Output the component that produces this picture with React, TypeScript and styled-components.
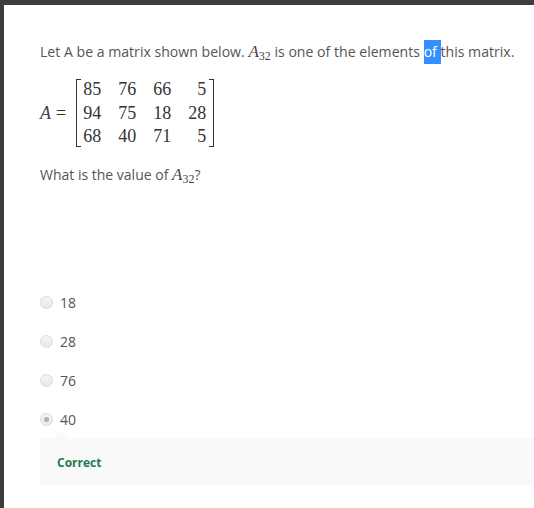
import React from "react";
import styled, { createGlobalStyle } from "styled-components";

const GlobalStyle = createGlobalStyle`
  html, body {
    margin: 0;
    padding: 0;
    background: #3d3d3d;
  }
  body {
    font-family: "Open Sans", "Liberation Sans", sans-serif;
  }
`;

const matrix = [
  [85, 76, 66, 5],
  [94, 75, 18, 28],
  [68, 40, 71, 5],
];

const choices = [
  { label: "18", checked: false },
  { label: "28", checked: false },
  { label: "76", checked: false },
  { label: "40", checked: true },
];

function Sub32() {
  return (
    <MathVar>
      A<Sub>32</Sub>
    </MathVar>
  );
}

export default function App() {
  return (
    <>
      <GlobalStyle />
      <Frame>
        <Page>
          <Prompt>
            Let A be a matrix shown below. <Sub32 /> is one of the elements{" "}
            <Selected>of </Selected>this matrix.
          </Prompt>

          <MatrixRow>
            <MathVar>A</MathVar>
            <Equals>=</Equals>
            <Bracket side="left" />
            <Grid>
              {matrix.map((row, r) =>
                row.map((v, c) => <Cell key={`${r}-${c}`}>{v}</Cell>)
              )}
            </Grid>
            <Bracket side="right" />
          </MatrixRow>

          <Question>
            What is the value of <Sub32 />?
          </Question>

          <Choices>
            {choices.map((ch) => (
              <Choice key={ch.label}>
                <Radio checked={ch.checked} />
                <ChoiceLabel>{ch.label}</ChoiceLabel>
              </Choice>
            ))}
          </Choices>

          <Feedback>
            <FeedbackText>Correct</FeedbackText>
          </Feedback>
        </Page>
      </Frame>
    </>
  );
}

const Frame = styled.div`
  padding: 5px 0 0 4px;
  height: 508px;
  box-sizing: border-box;
  background: #3d3d3d;
`;

const Page = styled.div`
  background: #ffffff;
  height: 100%;
  padding: 36px 0 0 36px;
  box-sizing: border-box;
  color: #555555;
`;

const Prompt = styled.div`
  font-size: 14.1px;
  line-height: 22px;
  white-space: pre;
`;

const MathVar = styled.span`
  font-family: "Liberation Serif", serif;
  font-style: italic;
  font-size: 17px;
  color: #444;
`;

const Sub = styled.sub`
  font-style: normal;
  font-size: 12px;
  vertical-align: -3px;
  line-height: 0;
`;

const Selected = styled.span`
  background: #3390ff;
  color: #ffffff;
  padding: 2px 0 3px;
`;

const MatrixRow = styled.div`
  display: flex;
  align-items: center;
  margin-top: 15px;
  font-family: "Liberation Serif", serif;
  font-size: 18px;
  color: #333;

  & > ${MathVar} {
    font-size: 18px;
  }
`;

const Equals = styled.span`
  margin: 0 10px 0 5px;
  font-size: 18px;
`;

const Bracket = styled.span<{ side: "left" | "right" }>`
  width: 4px;
  height: 66px;
  border: 1.5px solid #333;
  ${(p) => (p.side === "left" ? "border-right: none;" : "border-left: none;")}
  margin: ${(p) => (p.side === "left" ? "0 2px 0 0" : "0 0 0 3px")};
`;

const Grid = styled.div`
  display: grid;
  grid-template-columns: repeat(4, auto);
  column-gap: 17px;
`;

const Cell = styled.span`
  text-align: right;
  line-height: 23.5px;
  &:nth-child(4n + 1) {
    text-align: left;
  }
`;

const Question = styled.div`
  margin-top: 15px;
  font-size: 14px;
  line-height: 22px;
`;

const Choices = styled.div`
  margin-top: 106px;
  display: flex;
  flex-direction: column;
  gap: 17px;
`;

const Choice = styled.label`
  display: flex;
  align-items: center;
  gap: 7px;
  height: 22px;
`;

const Radio = styled.span<{ checked: boolean }>`
  position: relative;
  width: 11px;
  height: 11px;
  border-radius: 50%;
  border: 1px solid #dadada;
  background: linear-gradient(#f5f5f5, #e8e8e8);
  &::after {
    content: "";
    display: ${(p) => (p.checked ? "block" : "none")};
    position: absolute;
    left: 3px;
    top: 3px;
    width: 5px;
    height: 5px;
    border-radius: 50%;
    background: #b0b0b0;
  }
`;

const ChoiceLabel = styled.span`
  font-size: 14px;
  color: #555;
`;

const Feedback = styled.div`
  position: relative;
  margin-top: 7px;
  background: #f9f9f9;
  height: 47px;
  padding: 12px 0 0 17px;
  box-sizing: border-box;
  &::before {
    content: "";
    position: absolute;
    top: -7px;
    left: 14px;
    border-left: 7px solid transparent;
    border-right: 7px solid transparent;
    border-bottom: 7px solid #f9f9f9;
  }
`;

const FeedbackText = styled.span`
  font-size: 12px;
  font-weight: 700;
  color: #1e7b4f;
`;
